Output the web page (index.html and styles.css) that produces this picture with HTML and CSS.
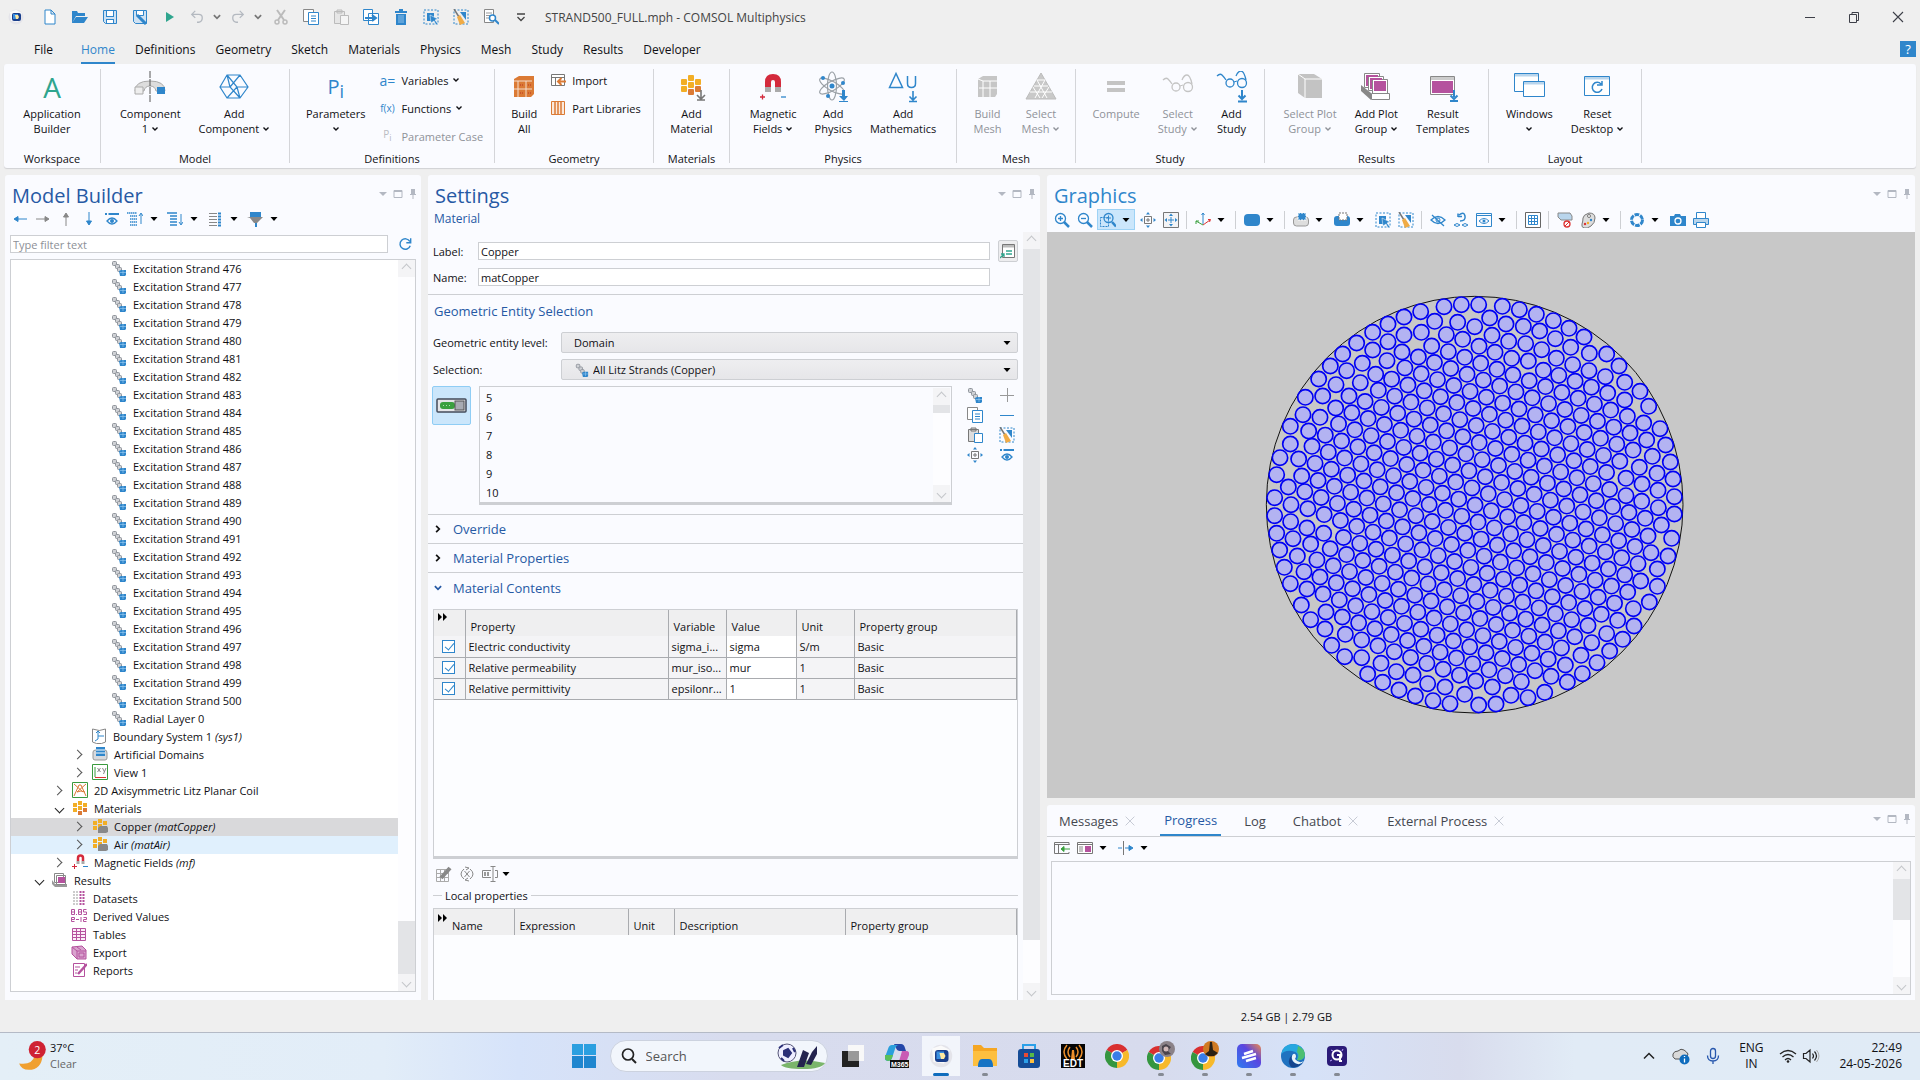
FILE: index.html
```html
<!DOCTYPE html>
<html lang="en">
<head>
<meta charset="utf-8">
<title>STRAND500_FULL.mph - COMSOL Multiphysics</title>
<link rel="stylesheet" href="styles.css">
</head>
<body>
<svg class="sprite" aria-hidden="true">
  <symbol id="logo" viewBox="0 0 16 16"><circle cx="8" cy="8" r="7.500" fill="#e4e4ea"/><path d="M2 3l6-2 6 3-4 9-7-1z" fill="#fafafa"/><rect x="4" y="4" width="9" height="8" rx="2" fill="#1a3f8c"/><rect x="5" y="5" width="5" height="5" fill="#3a8fe0"/><path d="M7 6h3l1 2-1 2H8z" fill="#ffe9a0"/></symbol>
  <symbol id="chev" viewBox="0 0 8 8"><path d="M1.500 2.500L4 5l2.500-2.500" fill="none" stroke="currentColor" stroke-width="1.400"/></symbol>
  <symbol id="caret" viewBox="0 0 8 8"><path d="M.5 2h7L4 6z" fill="currentColor"/></symbol>
  <symbol id="new" viewBox="0 0 16 16"><path d="M3 1h6l4 4v10H3zM9 1v4h4" fill="#fff" stroke="#2f86cb"/></symbol>
  <symbol id="open" viewBox="0 0 16 16"><path d="M0 2h5l1 2h7v3H4L0 14zM4 8h12l-4 6H0z" fill="#2f86cb"/></symbol>
  <symbol id="save" viewBox="0 0 16 16"><path d="M1.500 1.500h13v13h-11l-2-2z" fill="#cfe2f3" stroke="#2f86cb"/><rect x="4.500" y="1.500" width="7" height="6" fill="#fff" stroke="#2f86cb"/><rect x="4.500" y="10.500" width="7" height="4" fill="#fff" stroke="#2f86cb"/></symbol>
  <symbol id="saveas" viewBox="0 0 16 16"><path d="M1.500 1.500h13v13h-11l-2-2z" fill="#cfe2f3" stroke="#2f86cb"/><path d="M4.500 1.500h7v5h-7z" fill="#fff" stroke="#2f86cb"/><path d="M5 6l9 9" stroke="#2f86cb" stroke-width="3"/></symbol>
  <symbol id="play" viewBox="0 0 16 16"><path d="M4 3l8 5-8 5z" fill="#2fa58e"/></symbol>
  <symbol id="undo" viewBox="0 0 16 16"><path d="M2 5h8q4 0 4 4t-4 5H8M6 1L2 5l4 4" fill="none" stroke="#b4b9c0" stroke-width="1.500"/></symbol>
  <symbol id="redo" viewBox="0 0 16 16"><path d="M14 5H6q-4 0-4 4t4 5h2M10 1l4 4-4 4" fill="none" stroke="#b4b9c0" stroke-width="1.500"/></symbol>
  <symbol id="cut" viewBox="0 0 16 16"><path d="M4 1l7 10M12 1L5 11" stroke="#bbb" stroke-width="2"/><circle cx="4" cy="13" r="2" fill="none" stroke="#bbb" stroke-width="1.500"/><circle cx="12" cy="13" r="2" fill="none" stroke="#bbb" stroke-width="1.500"/></symbol>
  <symbol id="copy" viewBox="0 0 16 16"><path d="M.5.5h10v12H.5z" fill="#fff" stroke="#888"/><path d="M5.500 3.500h10v12h-10z" fill="#fff" stroke="#2f86cb"/><path d="M8 7h5M8 9.500h5M8 12h5" stroke="#2f86cb"/></symbol>
  <symbol id="pasteoff" viewBox="0 0 16 16"><path d="M1.500 2.500h10v12h-10zM4 1h5v3H4z" fill="#e6e6e6" stroke="#bbb"/><path d="M7.500 6.500h8v9h-8z" fill="#f5f5f5" stroke="#bbb"/></symbol>
  <symbol id="paste" viewBox="0 0 16 16"><path d="M1.500 2.500h10v12h-10zM4 1h5v3H4z" fill="#ddd" stroke="#777"/><path d="M7.500 6.500h8v9h-8z" fill="#fff" stroke="#2f86cb"/></symbol>
  <symbol id="dup" viewBox="0 0 16 16"><path d="M.5.5h9v11h-9zM5.500 4.500h10v11h-10z" fill="#fff" stroke="#2f86cb"/><path d="M2 9h10M9 6l4 3-4 3" fill="none" stroke="#2f86cb" stroke-width="2"/></symbol>
  <symbol id="trash" viewBox="0 0 16 16"><path d="M2 2h4V0h4v2h4v2H2zM3 5h10v11H3z" fill="#2f86cb"/><path d="M6 6v8M8 6v8M10 6v8" stroke="#8fc0e8"/></symbol>
  <symbol id="sel" viewBox="0 0 16 16"><rect x="1" y="1" width="14" height="14" fill="none" stroke="#2f86cb" stroke-dasharray="2 1.500"/><rect x="4" y="4" width="7" height="8" fill="#2f86cb"/><path d="M7 6l8 4-3 1 3 4-2 1-2-4-3 2z" fill="#2f86cb" stroke="#fff" stroke-width=".5"/></symbol>
  <symbol id="broom" viewBox="0 0 16 16"><rect x="1" y="1" width="14" height="14" fill="none" stroke="#2f86cb" stroke-dasharray="2 1.500"/><path d="M7 3h6v8z" fill="#2f86cb"/><path d="M1 0l5 8" stroke="#777" stroke-width="1.500"/><path d="M4 8l3-2 5 8-5 2z" fill="#f0ab45"/></symbol>
  <symbol id="find" viewBox="0 0 16 16"><path d="M1.500.5h9v13h-9z" fill="#fff" stroke="#888"/><path d="M3 4h6M3 6.500h5M3 9h3" stroke="#999"/><circle cx="9.500" cy="9" r="3" fill="#fff" stroke="#2f86cb" stroke-width="1.500"/><path d="M12 11l4 4" stroke="#2f86cb" stroke-width="2"/></symbol>
  <symbol id="more" viewBox="0 0 16 16"><path d="M4 5h8M4.500 8L8 11.500 11.500 8" fill="none" stroke="#444" stroke-width="1.300"/></symbol>
  <symbol id="min" viewBox="0 0 16 16"><path d="M3 8.500h10" stroke="#3d3f48"/></symbol>
  <symbol id="restore" viewBox="0 0 16 16"><path d="M3.500 5.500h7v8h-7zM6 5V3.500h6.500v8H11" fill="none" stroke="#3d3f48"/></symbol>
  <symbol id="close" viewBox="0 0 16 16"><path d="M3 3l10 10M13 3L3 13" stroke="currentColor" stroke-width="1.100"/></symbol>

  <symbol id="r-comp" viewBox="0 0 32 32"><path d="M1 20q0-10 15-10t15 10h-9q-1-5-6-5t-6 5z" fill="#ddd" stroke="#aaa"/><path d="M1 16h8v7H1z" fill="#eee" stroke="#aaa"/><path d="M23 16h8v7h-8z" fill="#2f86cb"/><path d="M16 0v32" stroke="#555" stroke-dasharray="7 1"/></symbol>
  <symbol id="r-addcomp" viewBox="0 0 32 32"><path d="M9 4h13l8 12-8 11H9L2 16zM22 4L12 16l10 11M2 16h10M9 4l10 0M9 27l10-11L9 4M19 16h11M12 16L9 4M19 16l3 11" fill="none" stroke="#2f86cb" stroke-width="1.200"/></symbol>
  <symbol id="r-build" viewBox="0 0 32 32"><path d="M6 8l5-3h15v18l-3 3H6z" fill="#db7a35"/><path d="M10 10v16M18 10v16M6 10h18M6 18h18" stroke="#fff" stroke-width="1" opacity=".75"/><path d="M12 14h3M20 14h3M12 22h3M20 22h3" stroke="#b32" stroke-dasharray="1 1"/></symbol>
  <symbol id="r-addmat" viewBox="0 0 32 32"><g fill="#f2ae26"><rect x="13" y="4" width="6" height="6" rx="1"/><rect x="6" y="8" width="6" height="6" rx="1"/><rect x="20" y="8" width="6" height="6" rx="1"/><rect x="13" y="11" width="6" height="6" rx="1"/><rect x="6" y="15" width="6" height="6" rx="1"/></g><g fill="#db7a35"><rect x="20" y="15" width="6" height="6" rx="1"/><rect x="13" y="18" width="6" height="6" rx="1"/></g><path d="M26 19v8M22 24l4 4 4-4M22 29h8" stroke="#777" stroke-width="1.600" fill="none"/></symbol>
  <symbol id="r-mag" viewBox="0 0 32 32"><path d="M11 17v-6q0-5 5-5t5 5v6" fill="none" stroke="#d42a3c" stroke-width="6"/><path d="M8 16h6v5H8zM18 16h6v5h-6z" fill="#aaa"/><path d="M3 26h5M5.500 23.500v5" stroke="#d42a3c" stroke-width="1.300"/><path d="M24 26h5" stroke="#2f86cb" stroke-width="1.300"/></symbol>
  <symbol id="r-phys" viewBox="0 0 32 32"><g fill="none" stroke="#9aa0a6" stroke-width="1.200"><ellipse cx="15" cy="15" rx="4.500" ry="14"/><ellipse cx="15" cy="15" rx="4.500" ry="14" transform="rotate(60 15 15)"/><ellipse cx="15" cy="15" rx="4.500" ry="14" transform="rotate(120 15 15)"/></g><g fill="#2f86cb"><circle cx="15" cy="15" r="2.500"/><circle cx="6" cy="7" r="2"/><circle cx="26" cy="12" r="2"/><circle cx="11" cy="25" r="2"/><path d="M25 19h3v6h3l-4 5-5-5h3z"/><path d="M22 30h9v1h-9z"/></g></symbol>
  <symbol id="r-math" viewBox="0 0 32 32"><path d="M2.500 16.500L9 2.500l6.500 14zM20.500 5v7.500q0 4 4 4t4-4V5" fill="none" stroke="#2f86cb" stroke-width="1.500"/><path d="M26 20v9M22.500 25.500L26 29l3.500-3.500M22 30.500h8" stroke="#2f86cb" stroke-width="1.600" fill="none"/></symbol>
  <symbol id="r-bmesh" viewBox="0 0 32 32"><path d="M6 8l5-3h14v18l-2 3H6z" fill="#c6c6c6"/><path d="M11 10v16M18 10v16M6 8l5 2h14M7 17h18" stroke="#fff" fill="none"/></symbol>
  <symbol id="r-smesh" viewBox="0 0 32 32"><path d="M16 2l15 26H1z" fill="#c9c9c9" stroke="#bcbcbc"/><path d="M12 9h8M9 15h14M5 21h22M12 9l10 18M8 16l7 11M20 9L10 27M24 16l-7 11" stroke="#fff" fill="none"/></symbol>
  <symbol id="r-eq" viewBox="0 0 32 32"><path d="M7 10h18v4H7zM7 17h18v4H7z" fill="#c4c4c4"/></symbol>
  <symbol id="glasses" viewBox="0 0 32 32"><path d="M1 9q3-3 5-1t4 5M20 9q2-5 5-5t5 9" fill="none" stroke="currentColor" stroke-width="1.300"/><circle cx="14" cy="16" r="4" fill="none" stroke="currentColor" stroke-width="1.300"/><circle cx="26" cy="16" r="4.500" fill="none" stroke="currentColor" stroke-width="1.300"/><path d="M18 15l3-1" stroke="currentColor"/></symbol>
  <symbol id="r-study" viewBox="0 0 32 32"><use href="#glasses" y="-4" width="32" height="32"/><path d="M26 19v9M22.500 24.500L26 28l3.500-3.500M22 30.500h9" stroke="#2f86cb" stroke-width="2" fill="none"/></symbol>
  <symbol id="r-selplot" viewBox="0 0 32 32"><path d="M4 3h16l8 5v19H11l-7-5z" fill="#c3c3c3"/><path d="M4 3l7 5h17M11 8v19" stroke="#fff" fill="none"/></symbol>
  <symbol id="r-addplot" viewBox="0 0 32 32"><path d="M1 14l10 8v7L1 20z" fill="#888"/><g fill="#fff" stroke="#888"><path d="M4.500 2.500h15v14h-15z"/><path d="M8.500 5.500h15v14h-15z"/><path d="M12.500 8.500h15v14h-15z"/><path d="M11.500 22.500h18v6h-18z"/></g><path d="M6 4h12v2H8v9H6zM10 7h12v2H12v9h-2zM14 10h12v10H14z" fill="#b5529e"/></symbol>
  <symbol id="r-result" viewBox="0 0 32 32"><path d="M3.500 5.500h24v18h-24z" fill="#fff" stroke="#888"/><path d="M4 6h23v3H4z" fill="#ccc"/><path d="M5 10h21v12H5z" fill="#b5529e"/><path d="M27 19v7M23.500 24.500L27 28l3.500-3.500M23 30h8" stroke="#2f86cb" stroke-width="2" fill="none"/></symbol>
  <symbol id="r-win" viewBox="0 0 32 32"><path d="M1.500 2.500h24v18h-24z" fill="#fff" stroke="#2f86cb"/><path d="M2 3h23v2.500H2z" fill="#b9d5ec"/><path d="M10.500 10.500h21v15h-21z" fill="#fff" stroke="#2f86cb"/><path d="M11 11h20v2.500H11z" fill="#b9d5ec"/></symbol>
  <symbol id="r-reset" viewBox="0 0 32 32"><path d="M3.500 5.500h25v19h-25z" fill="#fff" stroke="#2f86cb"/><path d="M4 6h24v2.500H4z" fill="#b9d5ec"/><path d="M20 13a5 5 0 1 0 1 5M21 10v4h-5" fill="none" stroke="#2f86cb" stroke-width="1.500"/></symbol>
  <symbol id="import" viewBox="0 0 16 16"><path d="M1.500 2.500h13v11h-13zM1.500 5.500h13M5.500 5.500v8" fill="#fff" stroke="#777"/><path d="M16 9.500H9M11.500 6L8 9.500l3.500 3.500" stroke="#db7a35" stroke-width="2" fill="none"/></symbol>
  <symbol id="partlib" viewBox="0 0 16 16"><path d="M1.500 1.500h13v13h-13z" fill="#fbe9dc" stroke="#db7a35"/><path d="M5 2v12M8 2v12M11 2v12" stroke="#db7a35" stroke-width="1.500"/></symbol>

  <symbol id="strand" viewBox="0 0 16 16"><g fill="#cfd1d5" stroke="#8f949b"><rect x="1.500" y="1.500" width="4" height="4" rx="1"/><rect x="4.500" y="4.500" width="4" height="4" rx="1"/><rect x="6.500" y="7.500" width="4" height="4" rx="1"/></g><path d="M8 11l2-1h5v5l-1 1H9z" fill="#2f86cb"/><path d="M9 12.500h6M12 10v5" stroke="#9fd0f5" stroke-width=".6"/></symbol>
  <symbol id="bsys" viewBox="0 0 16 16"><path d="M1.500 1v13l4 1.500h5l4-1.500V1q-6 3-13 0z" fill="#fff" stroke="#888"/><path d="M7 4v7M7 8h6M7 11l-3 2M5 5l2-2 2 2" stroke="#2f86cb" fill="none"/></symbol>
  <symbol id="artd" viewBox="0 0 16 16"><path d="M1 6q0-2 3-2h9q2 0 2 3v5q0 2-2 2H3q-2 0-2-2z" fill="#d8dade" stroke="#999"/><path d="M4 1h9v9H4z" fill="#2f86cb"/><path d="M4 4h9M4 7h9" stroke="#fff"/></symbol>
  <symbol id="view" viewBox="0 0 16 16"><path d="M.5.5h15v15H.5z" fill="#fff" stroke="#3a9a3e"/><path d="M3 3v10" stroke="#3a9a3e"/><path d="M3 13.500h11" stroke="#d33"/><path d="M5.500 4l3 4M8.500 4l-3 4M10.500 4l2 4M14 4l-2.500 6" stroke="#888"/></symbol>
  <symbol id="model2d" viewBox="0 0 16 16"><path d="M.5.5h15v15H.5z" fill="#fff" stroke="#3a9a3e"/><path d="M2 14L7 3h2l5 11M2 2l9 8M14 2l-9 8q4-2 8 0" fill="none" stroke="#db7a35"/></symbol>
  <symbol id="mats" viewBox="0 0 16 16"><path d="M6 1h4v4H6zM1 3h4v4H1zM11 3h4v4h-4zM6 6h4v4H6zM1 8h4v4H1z" fill="#f2ae26"/><path d="M11 8h4v4h-4zM6 11h4v4H6z" fill="#db7a35"/></symbol>
  <symbol id="mat" viewBox="0 0 16 16"><path d="M6 1h4v4H6zM1 3h4v4H1zM11 3h4v4h-4zM6 6h4v4H6zM1 8h4v4H1z" fill="#f2ae26"/><path d="M6 10l2-2h7l1 2v4l-2 1H6z" fill="#888"/></symbol>
  <symbol id="magn" viewBox="0 0 16 16"><path d="M6 7V4q0-2.500 2.500-2.500T11 4v3" fill="none" stroke="#d42a3c" stroke-width="2.500"/><path d="M4.500 7h3v3h-3zM9.500 7h3v3h-3z" fill="#aaa"/><path d="M0 12.500h5M2.500 10v5" stroke="#d42a3c"/><path d="M11 12.500h5" stroke="#2f86cb"/></symbol>
  <symbol id="resl" viewBox="0 0 16 16"><path d="M0 8l3 4h12v3H3l-3-3z" fill="#999"/><path d="M2.500 1.500h9v9h-9zM4.500 3.500h9v9h-9z" fill="#fff" stroke="#888"/><path d="M6 5h7v6H6z" fill="#b5529e"/></symbol>
  <symbol id="dset" viewBox="0 0 16 16"><path d="M3 1v14M6 1v14" stroke="#999" stroke-dasharray="2 1"/><path d="M9.500 1v14M12.500 1v14" stroke="#b5529e" stroke-width="2" stroke-dasharray="2 1"/></symbol>
  <symbol id="derv" viewBox="0 0 16 16"><path d="M.5 1.500h3v5h-3zM.5 4h3M5 6.500h1M7.500 1.500h3v5h-3zM7.500 4h3M15.500 1.500h-3V4h3v2.500h-3M3.500 13.500h-3v-4h3v2h-3M5 11.500h3M10 9v5M12.500 9.500h3v2h-3v2h3" fill="none" stroke="#b5529e"/></symbol>
  <symbol id="tabl" viewBox="0 0 16 16"><path d="M1.500 2.500h13v12h-13z" fill="#fbeef8" stroke="#b5529e"/><path d="M1 5.500h14M1 8.500h14M1 11.500h14M5.500 2v12M9.500 2v12" stroke="#b5529e"/></symbol>
  <symbol id="expo" viewBox="0 0 16 16"><path d="M1 3l10-1 4 4v9H6l-5-5z" fill="#d9a3ce" stroke="#b5529e"/><path d="M1 3l5 4h9M6 7v8M6 3l4 3M8 9h5v4H8z" fill="none" stroke="#b5529e"/></symbol>
  <symbol id="rept" viewBox="0 0 16 16"><path d="M2.500 1.500h11v13h-11z" fill="#fff" stroke="#b5529e"/><path d="M4 5h5M4 8h3M4 11h2" stroke="#b5529e"/><path d="M16 2L7 12" stroke="#b5529e" stroke-width="2.500"/></symbol>

  <symbol id="al" viewBox="0 0 16 16"><path d="M15 8H3M6 5.500L2 8l4 2.500z" fill="currentColor" stroke="currentColor"/></symbol>
  <symbol id="ar" viewBox="0 0 16 16"><path d="M1 8h12M10 5.500l4 2.500-4 2.500z" fill="currentColor" stroke="currentColor"/></symbol>
  <symbol id="au" viewBox="0 0 16 16"><path d="M8 15V3M5.500 6L8 2l2.500 4z" fill="currentColor" stroke="currentColor"/></symbol>
  <symbol id="ad" viewBox="0 0 16 16"><path d="M8 1v12M5.500 10L8 14l2.500-4z" fill="currentColor" stroke="currentColor"/></symbol>
  <symbol id="eye" viewBox="0 0 16 16"><path d="M1 3h2M4.500 3H15" stroke="#2f86cb" stroke-width="2"/><path d="M3 10q5-6 10 0-5 6-10 0z" fill="none" stroke="#2f86cb" stroke-width="1.300"/><circle cx="8" cy="10" r="2" fill="#2f86cb"/></symbol>
  <symbol id="colup" viewBox="0 0 16 16"><path d="M0 2h10M3 5h7M3 8h7M3 11h7M3 14h7" stroke="#2f86cb" stroke-width="1.500" stroke-dasharray="1.500 .5"/><path d="M14 13V3M12 5l2-3 2 3" stroke="#2f86cb" fill="none"/></symbol>
  <symbol id="coldn" viewBox="0 0 16 16"><path d="M0 2h10M3 5h7M3 8h7M3 11h7M3 14h7" stroke="#2f86cb" stroke-width="1.500"/><path d="M14 3v10M12 11l2 3 2-3" stroke="#2f86cb" fill="none"/></symbol>
  <symbol id="cols" viewBox="0 0 16 16"><path d="M2 2.500h8M2 5.500h8M2 8.500h8M2 11.500h8M2 14.500h8" stroke="#888" stroke-width="1.200"/><path d="M11 2.500h3M11 5.500h3M11 8.500h3M11 11.500h3M11 14.500h3" stroke="#2f86cb" stroke-width="1.800"/></symbol>
  <symbol id="filter" viewBox="0 0 16 16"><path d="M3 1h11v5H3z" fill="#2f86cb"/><path d="M0 6h16l-6 6H7L3 7z" fill="#888"/><path d="M8 12h2v4H8z" fill="#2f86cb"/></symbol>
  <symbol id="refresh" viewBox="0 0 16 16"><path d="M13.500 5a6 6 0 1 0 .5 5M14.500 1.500v5h-5" fill="none" stroke="#2f86cb" stroke-width="1.600"/></symbol>
  <symbol id="panemenu" viewBox="0 0 40 12"><path d="M1 4h8L5 8z" fill="#b3b8c2"/><path d="M16 2.500h8v7h-8zM16 3.500h8" fill="none" stroke="#b3b8c2"/><path d="M33 1h4v5h1v1h-2.500v4h-1V7H32V6h1z" fill="#b3b8c2"/></symbol>
  <symbol id="goto" viewBox="0 0 16 16"><path d="M2.500 1.500h12v13h-12z" fill="#fff" stroke="#777"/><path d="M3 2h11v2.500H3z" fill="#bbb"/><path d="M6 8h6M6 11h6M0 15l4-4M1 11h3v3" stroke="#2fa58e" stroke-width="1.300" fill="none"/></symbol>
  <symbol id="active" viewBox="0 0 32 16"><rect x="1" y="1" width="29" height="13" rx="1" fill="#e5e5e8" stroke="#444b5a" stroke-width="1.500"/><rect x="4" y="4" width="15" height="7" rx="3" fill="#3aa03e"/><path d="M7 7.500h7" stroke="#a8e0a8" stroke-dasharray="1 2"/><rect x="19" y="3" width="9" height="9" fill="#a8abb2" stroke="#555"/></symbol>
  <symbol id="plus" viewBox="0 0 16 16"><path d="M1 8.500h14M8.500 1v14" stroke="#999"/></symbol>
  <symbol id="minus" viewBox="0 0 16 16"><path d="M1 8.500h14" stroke="#2f86cb"/></symbol>
  <symbol id="center" viewBox="0 0 16 16"><path d="M4.500 4.500h7v7h-7zM8 6v4M6 8h4" fill="none" stroke="#777"/><path d="M8 0l2 2.500H6zM8 16l2-2.500H6zM0 8l2.500-2v4zM16 8l-2.500-2v4z" fill="#2f86cb"/></symbol>
  <symbol id="extents" viewBox="0 0 16 16"><path d="M.5.500h15v15H.5z" fill="#f4f4f6" stroke="#777"/><path d="M8 1.500l2 2.500H6zM8 14.500l2-2.500H6zM1.500 8L4 6v4zM14.500 8L12 6v4z" fill="#2f86cb"/><path d="M5 8h6M8 5v6" stroke="#2f86cb"/></symbol>
  <symbol id="ff" viewBox="0 0 10 8"><path d="M0 0l4 4-4 4zM5 0l4 4-4 4z" fill="#000"/></symbol>
  <symbol id="edit" viewBox="0 0 16 16"><path d="M.5 3.500h12v12H.5zM.5 7.500h12M.5 11.500h12M4.500 3.500v12M8.500 3.500v12" fill="none" stroke="#aaa"/><path d="M14 2L5 12" stroke="#888" stroke-width="4"/></symbol>
  <symbol id="resetx" viewBox="0 0 16 16"><path d="M5 3q-6 5 0 10M11 3q6 5 0 10M5.500 5l5 6M10.500 5l-5 6M6 1l4 1-3 2M10 15l-4-1 3-2" fill="none" stroke="#888"/></symbol>
  <symbol id="field" viewBox="0 0 16 16"><path d="M9 4.500H.5v7H9M13 4.500h2.500v7H13M11 0v16M8.500.5h5M8.500 15.500h5" fill="none" stroke="#888"/><path d="M2 6h2v4H2zM5 6h2v4H5z" fill="#999"/></symbol>

  <symbol id="zin" viewBox="0 0 16 16"><circle cx="6.500" cy="6.500" r="5" fill="none" stroke="#2f86cb" stroke-width="1.300"/><path d="M4 6.500h5M6.500 4v5" stroke="#2f86cb" stroke-width="1.300"/><path d="M10 10l5 5" stroke="#2f86cb" stroke-width="2.500"/></symbol>
  <symbol id="zout" viewBox="0 0 16 16"><circle cx="6.500" cy="6.500" r="5" fill="none" stroke="#2f86cb" stroke-width="1.300"/><path d="M4 6.500h5" stroke="#2f86cb" stroke-width="1.300"/><path d="M10 10l5 5" stroke="#2f86cb" stroke-width="2.500"/></symbol>
  <symbol id="zbox" viewBox="0 0 16 16"><path d="M.5 5.500h8v9h-8z" fill="none" stroke="#2f86cb" stroke-dasharray="2 1"/><circle cx="8.500" cy="6" r="4.500" fill="none" stroke="#2f86cb" stroke-width="1.300"/><path d="M6 6h5M8.500 3.500v5" stroke="#2f86cb"/><path d="M12 10l4 4.500" stroke="#2f86cb" stroke-width="2.500"/></symbol>
  <symbol id="axes" viewBox="0 0 16 16"><path d="M8 12V1M6.500 3L8 1l1.500 2" stroke="#2f86cb" fill="none"/><path d="M8 13l7-5M13 7.500l2.500 0-1 2.500" stroke="#d33" fill="none"/><path d="M8 13L1 9M1 12V9h3" stroke="#3aa03e" fill="none"/></symbol>
  <symbol id="blob" viewBox="0 0 16 16"><rect y="2" width="16" height="12" rx="4" fill="#2f86cb"/></symbol>
  <symbol id="selg" viewBox="0 0 16 16"><rect x=".5" y="5" width="15" height="9" rx="3" fill="#ddd" stroke="#999"/><rect x="5" y="1" width="8" height="7" fill="#2f86cb" stroke="#fff" stroke-dasharray="2 1"/></symbol>
  <symbol id="selb" viewBox="0 0 16 16"><rect y="4" width="16" height="10" rx="3" fill="#2f86cb"/><rect x="5" y="1" width="8" height="7" fill="#fff" stroke="#777" stroke-dasharray="2 1"/></symbol>
  <symbol id="hide" viewBox="0 0 16 16"><path d="M1 8q7-7 14 0-7 7-14 0zM2 3l12 11" fill="none" stroke="#2f86cb" stroke-width="1.300"/><circle cx="8" cy="8" r="2" fill="none" stroke="#2f86cb"/></symbol>
  <symbol id="rehide" viewBox="0 0 16 16"><path d="M5 5V1.500M5 4.500h4M6 3q5-4 6 1t-5 5" fill="none" stroke="#2f86cb" stroke-width="1.500"/><path d="M1 13q3-3 6 0-3 3-6 0zM9 13q3-3 6 0-3 3-6 0z" fill="none" stroke="#2f86cb"/></symbol>
  <symbol id="viewb" viewBox="0 0 16 16"><path d="M.5 1.500h15v13H.5zM.5 3.500h15" fill="none" stroke="#2f86cb"/><path d="M3 9q5-5 10 0-5 5-10 0z" fill="none" stroke="#2f86cb"/><circle cx="8" cy="9" r="1.500" fill="#2f86cb"/></symbol>
  <symbol id="grid" viewBox="0 0 16 16"><path d="M.5.500h15v15H.5z" fill="#fff" stroke="#666"/><path d="M3.500 3.500h9v9h-9zM6.500 3v10M9.500 3v10M3 6.500h10M3 9.500h10" fill="none" stroke="#2f86cb"/></symbol>
  <symbol id="noclip" viewBox="0 0 16 16"><path d="M1 1h12l2 3v4H4L1 5z" fill="#b9d5ec" stroke="#888"/><circle cx="10" cy="12" r="3" fill="#fff" stroke="#d33" stroke-width="1.300"/><path d="M8 14l4-4" stroke="#d33"/></symbol>
  <symbol id="palette" viewBox="0 0 16 16"><path d="M9 1q6 0 6 5t-4 8-7 2q-3-1-2-4t1-6 6-5z" fill="#ddd" stroke="#777"/><circle cx="9" cy="4" r="1.500" fill="#fff" stroke="#777"/><circle cx="11" cy="8" r="1.200" fill="#2f86cb"/><circle cx="8" cy="11" r="1.200" fill="#f2ae26"/><circle cx="5" cy="12" r="1.200" fill="#d33"/></symbol>
  <symbol id="shutter" viewBox="0 0 16 16"><circle cx="8" cy="8" r="5.500" fill="none" stroke="#2f86cb" stroke-width="3" stroke-dasharray="4.700 1"/></symbol>
  <symbol id="camera" viewBox="0 0 16 16"><path d="M0 4h4l1-2h5l1 2h5v10H0z" fill="#2f86cb"/><circle cx="8" cy="9" r="3" fill="#2f86cb" stroke="#fff" stroke-width="1.300"/></symbol>
  <symbol id="printer" viewBox="0 0 16 16"><path d="M3.500.500h9v6h-9z" fill="#fff" stroke="#2f86cb"/><path d="M.5 6.500h15v6H.5z" fill="#b9d5ec" stroke="#2f86cb"/><path d="M3.500 10.500h9v5h-9z" fill="#fff" stroke="#2f86cb"/></symbol>
  <symbol id="wleft" viewBox="0 0 16 16"><path d="M15 5V2.500H.5v11H15V12M.5 4.500h15M4.500 4.500v9" fill="none" stroke="#777"/><path d="M16 9H8M10 6.500L7 9l3 2.500z" fill="#3aa03e" stroke="#3aa03e"/></symbol>
  <symbol id="wplot" viewBox="0 0 16 16"><path d="M.5 2.500h15v11H.5zM.5 4.500h15" fill="#fff" stroke="#777"/><path d="M8 6h6v6H8z" fill="#b5529e"/><path d="M2 7h4M2 9h4M2 11h4" stroke="#888"/></symbol>
  <symbol id="split" viewBox="0 0 16 16"><path d="M5.500 1v14" stroke="#777"/><path d="M0 8h4M7 8h6M11 5.500l4 2.500-4 2.500z" fill="#2f86cb" stroke="#2f86cb"/></symbol>

  <symbol id="chrome" viewBox="0 0 24 24"><path d="M12 12L1.600 6A12 12 0 0 1 22.400 6z" fill="#d93030"/><path d="M12 12L22.400 6A12 12 0 0 1 12 24z" fill="#f7b92b"/><path d="M12 12v12A12 12 0 0 1 1.600 6z" fill="#35963f"/><circle cx="12" cy="12" r="6" fill="#fff"/><circle cx="12" cy="12" r="4.700" fill="#3a7de8"/></symbol>
</svg>

<header class="titlebar">
  <span class="applogo"><svg class="i16"><use href="#logo"/></svg></span>
  <div class="quick">
    <button aria-label="New"><svg class="i16"><use href="#new"/></svg></button>
    <button aria-label="Open"><svg class="i16"><use href="#open"/></svg></button>
    <button aria-label="Save"><svg class="i16"><use href="#save"/></svg></button>
    <button aria-label="Save as"><svg class="i16"><use href="#saveas"/></svg></button>
    <button aria-label="Run"><svg class="i16"><use href="#play"/></svg></button>
    <button class="slim" aria-label="Undo"><svg class="i14"><use href="#undo"/></svg></button>
    <button class="drop" aria-label="Undo list"><svg class="i10"><use href="#chev"/></svg></button>
    <button class="slim" aria-label="Redo"><svg class="i14"><use href="#redo"/></svg></button>
    <button class="drop" aria-label="Redo list"><svg class="i10"><use href="#chev"/></svg></button>
    <button aria-label="Cut"><svg class="i16"><use href="#cut"/></svg></button>
    <button aria-label="Copy"><svg class="i16"><use href="#copy"/></svg></button>
    <button aria-label="Paste"><svg class="i16"><use href="#pasteoff"/></svg></button>
    <button aria-label="Duplicate"><svg class="i16"><use href="#dup"/></svg></button>
    <button aria-label="Delete"><svg class="i16"><use href="#trash"/></svg></button>
    <button aria-label="Select"><svg class="i16"><use href="#sel"/></svg></button>
    <button aria-label="Clear selection"><svg class="i16"><use href="#broom"/></svg></button>
    <button aria-label="Find"><svg class="i16"><use href="#find"/></svg></button>
    <button aria-label="Customize"><svg class="i16"><use href="#more"/></svg></button>
  </div>
  <h1>STRAND500_FULL.mph - COMSOL Multiphysics</h1>
  <div class="winbtns">
    <button aria-label="Minimize"><svg class="i16"><use href="#min"/></svg></button>
    <button aria-label="Restore"><svg class="i16"><use href="#restore"/></svg></button>
    <button aria-label="Close"><svg class="i16"><use href="#close"/></svg></button>
  </div>
</header>

<nav class="menu">
  <a href="#" class="file">File</a><a href="#" class="on">Home</a><a href="#">Definitions</a><a href="#">Geometry</a><a href="#">Sketch</a><a href="#">Materials</a><a href="#">Physics</a><a href="#">Mesh</a><a href="#">Study</a><a href="#">Results</a><a href="#">Developer</a>
  <button class="help" aria-label="Help">?</button>
</nav>

<section class="ribbon">
  <div class="group g1"><div class="btns"><button><span class="big green">A</span><span>Application<br>Builder</span></button></div><p>Workspace</p></div>
  <div class="group g2"><div class="btns">
    <button><svg class="i32"><use href="#r-comp"/></svg><span>Component<br>1 <svg class="chev"><use href="#chev"/></svg></span></button>
    <button><svg class="i32"><use href="#r-addcomp"/></svg><span>Add<br>Component <svg class="chev"><use href="#chev"/></svg></span></button></div><p>Model</p></div>
  <div class="group g3"><div class="btns">
    <button><span class="big pi">P<sub>i</sub></span><span>Parameters<br><svg class="chev"><use href="#chev"/></svg></span></button>
    <div class="stack"><button><i class="lead">a=</i>Variables <svg class="chev"><use href="#chev"/></svg></button><button><i class="lead fx">f(x)</i>Functions <svg class="chev"><use href="#chev"/></svg></button><button disabled><i class="lead fx">P<sub>i</sub></i>Parameter Case</button></div></div><p>Definitions</p></div>
  <div class="group g4"><div class="btns">
    <button><svg class="i32"><use href="#r-build"/></svg><span>Build<br>All</span></button>
    <div class="stack"><button><svg class="lead i16"><use href="#import"/></svg>Import</button><button><svg class="lead i16"><use href="#partlib"/></svg>Part Libraries</button></div></div><p>Geometry</p></div>
  <div class="group g5"><div class="btns"><button><svg class="i32"><use href="#r-addmat"/></svg><span>Add<br>Material</span></button></div><p>Materials</p></div>
  <div class="group g6"><div class="btns">
    <button><svg class="i32"><use href="#r-mag"/></svg><span>Magnetic<br>Fields <svg class="chev"><use href="#chev"/></svg></span></button>
    <button><svg class="i32"><use href="#r-phys"/></svg><span>Add<br>Physics</span></button>
    <button><svg class="i32"><use href="#r-math"/></svg><span>Add<br>Mathematics</span></button></div><p>Physics</p></div>
  <div class="group g7"><div class="btns">
    <button disabled><svg class="i32"><use href="#r-bmesh"/></svg><span>Build<br>Mesh</span></button>
    <button disabled><svg class="i32"><use href="#r-smesh"/></svg><span>Select<br>Mesh <svg class="chev"><use href="#chev"/></svg></span></button></div><p>Mesh</p></div>
  <div class="group g8"><div class="btns">
    <button disabled><svg class="i32"><use href="#r-eq"/></svg><span>Compute</span></button>
    <button disabled><svg class="i32 pale"><use href="#glasses"/></svg><span>Select<br>Study <svg class="chev"><use href="#chev"/></svg></span></button>
    <button><svg class="i32 blue"><use href="#r-study"/></svg><span>Add<br>Study</span></button></div><p>Study</p></div>
  <div class="group g9"><div class="btns">
    <button disabled><svg class="i32"><use href="#r-selplot"/></svg><span>Select Plot<br>Group <svg class="chev"><use href="#chev"/></svg></span></button>
    <button><svg class="i32"><use href="#r-addplot"/></svg><span>Add Plot<br>Group <svg class="chev"><use href="#chev"/></svg></span></button>
    <button><svg class="i32"><use href="#r-result"/></svg><span>Result<br>Templates</span></button></div><p>Results</p></div>
  <div class="group g10"><div class="btns">
    <button><svg class="i32"><use href="#r-win"/></svg><span>Windows<br><svg class="chev"><use href="#chev"/></svg></span></button>
    <button><svg class="i32"><use href="#r-reset"/></svg><span>Reset<br>Desktop <svg class="chev"><use href="#chev"/></svg></span></button></div><p>Layout</p></div>
</section>

<main class="work">
  <section class="pane builder">
    <div class="panehead"><h2>Model Builder</h2><svg class="panemenu"><use href="#panemenu"/></svg></div>
    <div class="treebar">
      <button class="blue" aria-label="Previous"><svg class="i16"><use href="#al"/></svg></button>
      <button class="grey" aria-label="Next"><svg class="i16"><use href="#ar"/></svg></button>
      <button class="grey" aria-label="Up"><svg class="i16"><use href="#au"/></svg></button>
      <button class="blue" aria-label="Down"><svg class="i16"><use href="#ad"/></svg></button>
      <button aria-label="Show"><svg class="i16"><use href="#eye"/></svg></button>
      <button class="pair" aria-label="Collapse"><svg class="i16"><use href="#colup"/></svg><svg class="caret"><use href="#caret"/></svg></button>
      <button class="pair" aria-label="Expand"><svg class="i16"><use href="#coldn"/></svg><svg class="caret"><use href="#caret"/></svg></button>
      <button class="pair" aria-label="Columns"><svg class="i16"><use href="#cols"/></svg><svg class="caret"><use href="#caret"/></svg></button>
      <button class="pair" aria-label="Filter"><svg class="i16"><use href="#filter"/></svg><svg class="caret"><use href="#caret"/></svg></button>
    </div>
    <div class="filter"><input type="text" placeholder="Type filter text" aria-label="Filter"><button aria-label="Refresh"><svg class="i14"><use href="#refresh"/></svg></button></div>
    <div class="treebox">
      <ul class="tree">
        <li class="l3"><svg><use href="#strand"/></svg>Excitation Strand 476</li>
        <li class="l3"><svg><use href="#strand"/></svg>Excitation Strand 477</li>
        <li class="l3"><svg><use href="#strand"/></svg>Excitation Strand 478</li>
        <li class="l3"><svg><use href="#strand"/></svg>Excitation Strand 479</li>
        <li class="l3"><svg><use href="#strand"/></svg>Excitation Strand 480</li>
        <li class="l3"><svg><use href="#strand"/></svg>Excitation Strand 481</li>
        <li class="l3"><svg><use href="#strand"/></svg>Excitation Strand 482</li>
        <li class="l3"><svg><use href="#strand"/></svg>Excitation Strand 483</li>
        <li class="l3"><svg><use href="#strand"/></svg>Excitation Strand 484</li>
        <li class="l3"><svg><use href="#strand"/></svg>Excitation Strand 485</li>
        <li class="l3"><svg><use href="#strand"/></svg>Excitation Strand 486</li>
        <li class="l3"><svg><use href="#strand"/></svg>Excitation Strand 487</li>
        <li class="l3"><svg><use href="#strand"/></svg>Excitation Strand 488</li>
        <li class="l3"><svg><use href="#strand"/></svg>Excitation Strand 489</li>
        <li class="l3"><svg><use href="#strand"/></svg>Excitation Strand 490</li>
        <li class="l3"><svg><use href="#strand"/></svg>Excitation Strand 491</li>
        <li class="l3"><svg><use href="#strand"/></svg>Excitation Strand 492</li>
        <li class="l3"><svg><use href="#strand"/></svg>Excitation Strand 493</li>
        <li class="l3"><svg><use href="#strand"/></svg>Excitation Strand 494</li>
        <li class="l3"><svg><use href="#strand"/></svg>Excitation Strand 495</li>
        <li class="l3"><svg><use href="#strand"/></svg>Excitation Strand 496</li>
        <li class="l3"><svg><use href="#strand"/></svg>Excitation Strand 497</li>
        <li class="l3"><svg><use href="#strand"/></svg>Excitation Strand 498</li>
        <li class="l3"><svg><use href="#strand"/></svg>Excitation Strand 499</li>
        <li class="l3"><svg><use href="#strand"/></svg>Excitation Strand 500</li>
        <li class="l3"><svg><use href="#strand"/></svg>Radial Layer 0</li>
        <li class="l2"><svg><use href="#bsys"/></svg>Boundary System 1&nbsp;<em>(sys1)</em></li>
        <li class="l2 shut"><svg><use href="#artd"/></svg>Artificial Domains</li>
        <li class="l2 shut"><svg><use href="#view"/></svg>View 1</li>
        <li class="l1 shut"><svg><use href="#model2d"/></svg>2D Axisymmetric Litz Planar Coil</li>
        <li class="l1 openn"><svg><use href="#mats"/></svg>Materials</li>
        <li class="l2 shut picked"><svg><use href="#mat"/></svg>Copper&nbsp;<em>(matCopper)</em></li>
        <li class="l2 shut hover"><svg><use href="#mat"/></svg>Air&nbsp;<em>(matAir)</em></li>
        <li class="l1 shut"><svg><use href="#magn"/></svg>Magnetic Fields&nbsp;<em>(mf)</em></li>
        <li class="l0 openn"><svg><use href="#resl"/></svg>Results</li>
        <li class="l1"><svg><use href="#dset"/></svg>Datasets</li>
        <li class="l1"><svg><use href="#derv"/></svg>Derived Values</li>
        <li class="l1"><svg><use href="#tabl"/></svg>Tables</li>
        <li class="l1"><svg><use href="#expo"/></svg>Export</li>
        <li class="l1"><svg><use href="#rept"/></svg>Reports</li>
      </ul>
      <div class="bar treescroll"><span class="up"></span><span class="room"></span><span class="thumb"></span><span class="down"></span></div>
    </div>
  </section>

  <section class="pane settings">
    <div class="panehead"><h2>Settings</h2><svg class="panemenu"><use href="#panemenu"/></svg></div>
    <h3 class="kind">Material</h3>
    <div class="scroller">
      <form class="form">
        <div class="names">
          <label for="lab">Label:</label><input id="lab" type="text" value="Copper"><button type="button" class="goto" aria-label="Go to source"><svg class="i16"><use href="#goto"/></svg></button>
          <label for="nam">Name:</label><input id="nam" type="text" value="matCopper">
        </div>
        <h3 class="sec first">Geometric Entity Selection</h3>
        <div class="geo">
          <label for="lev">Geometric entity level:</label><div class="pick"><select id="lev"><option>Domain</option></select><svg class="caret"><use href="#caret"/></svg></div>
          <label for="seln">Selection:</label><div class="pick withicon"><svg class="i14 lefticon"><use href="#strand"/></svg><select id="seln"><option>All Litz Strands (Copper)</option></select><svg class="caret"><use href="#caret"/></svg></div>
        </div>
        <div class="entities">
          <button type="button" class="toggle" aria-label="Active"><svg><use href="#active"/></svg></button>
          <div class="list"><ul><li>5</li><li>6</li><li>7</li><li>8</li><li>9</li><li>10</li></ul><div class="bar listscroll"><span class="up"></span><span class="thumb"></span><span class="room"></span><span class="down"></span></div></div>
          <div class="tools">
            <button type="button" aria-label="Create selection"><svg class="i16"><use href="#strand"/></svg></button><button type="button" aria-label="Add"><svg class="i16"><use href="#plus"/></svg></button>
            <button type="button" aria-label="Copy selection"><svg class="i16"><use href="#copy"/></svg></button><button type="button" aria-label="Remove"><svg class="i16"><use href="#minus"/></svg></button>
            <button type="button" aria-label="Paste selection"><svg class="i16"><use href="#paste"/></svg></button><button type="button" aria-label="Clear"><svg class="i16"><use href="#broom"/></svg></button>
            <button type="button" aria-label="Zoom to selection"><svg class="i16"><use href="#center"/></svg></button><button type="button" aria-label="Visibility"><svg class="i16"><use href="#eye"/></svg></button>
          </div>
        </div>
        <h3 class="sec fold"><svg class="side"><use href="#chev"/></svg>Override</h3>
        <h3 class="sec fold"><svg class="side"><use href="#chev"/></svg>Material Properties</h3>
        <h3 class="sec fold unfolded"><svg><use href="#chev"/></svg>Material Contents</h3>
        <div class="tablebox contents">
          <table>
            <colgroup><col class="c31"><col class="c203"><col class="c58"><col class="c70"><col class="c58"><col></colgroup>
            <thead><tr><th class="ffc"><svg><use href="#ff"/></svg></th><th>Property</th><th>Variable</th><th>Value</th><th>Unit</th><th>Property group</th></tr></thead>
            <tbody>
              <tr><td><input type="checkbox" checked aria-label="Electric conductivity"></td><td>Electric conductivity</td><td>sigma_i...</td><td class="w">sigma</td><td>S/m</td><td>Basic</td></tr>
              <tr><td><input type="checkbox" checked aria-label="Relative permeability"></td><td>Relative permeability</td><td>mur_iso...</td><td class="w">mur</td><td>1</td><td>Basic</td></tr>
              <tr><td><input type="checkbox" checked aria-label="Relative permittivity"></td><td>Relative permittivity</td><td>epsilonr...</td><td class="w">1</td><td>1</td><td>Basic</td></tr>
            </tbody>
          </table>
        </div>
        <div class="minibar"><button type="button" aria-label="Edit"><svg class="i16"><use href="#edit"/></svg></button><button type="button" aria-label="Reset"><svg class="i16"><use href="#resetx"/></svg></button><button type="button" aria-label="Rename"><svg class="i16"><use href="#field"/></svg><svg class="caret"><use href="#caret"/></svg></button></div>
        <h4 class="rule">Local properties</h4>
        <div class="tablebox local">
          <table>
            <colgroup><col class="c80"><col class="c114"><col class="c46"><col class="c171"><col></colgroup>
            <thead><tr><th class="ffn"><svg><use href="#ff"/></svg>Name</th><th>Expression</th><th>Unit</th><th>Description</th><th>Property group</th></tr></thead>
          </table>
        </div>
      </form>
      <div class="bar formscroll"><span class="up"></span><span class="thumb"></span><span class="room"></span><span class="down"></span></div>
    </div>
  </section>

  <div class="right">
    <section class="pane graphics">
      <div class="panehead"><h2 class="lit">Graphics</h2><svg class="panemenu"><use href="#panemenu"/></svg></div>
      <div class="gbar">
        <button aria-label="Zoom in"><svg><use href="#zin"/></svg></button><button aria-label="Zoom out"><svg><use href="#zout"/></svg></button>
        <button class="lit" aria-label="Zoom box"><svg><use href="#zbox"/></svg><svg class="caret"><use href="#caret"/></svg></button>
        <button aria-label="Zoom to selection"><svg><use href="#center"/></svg></button><button aria-label="Zoom extents"><svg><use href="#extents"/></svg></button>
        <hr class="near"><button aria-label="Axes"><svg><use href="#axes"/></svg><svg class="caret"><use href="#caret"/></svg></button>
        <hr><button aria-label="Level"><svg><use href="#blob"/></svg><svg class="caret"><use href="#caret"/></svg></button>
        <hr><button aria-label="Select objects"><svg><use href="#selg"/></svg><svg class="caret"><use href="#caret"/></svg></button><button class="apart" aria-label="Select domains"><svg><use href="#selb"/></svg><svg class="caret"><use href="#caret"/></svg></button>
        <button class="apart" aria-label="Select box"><svg><use href="#sel"/></svg></button><button aria-label="Deselect"><svg><use href="#broom"/></svg></button>
        <hr class="near"><button aria-label="Hide"><svg><use href="#hide"/></svg></button><button aria-label="Reset hiding"><svg><use href="#rehide"/></svg></button><button aria-label="View"><svg><use href="#viewb"/></svg><svg class="caret"><use href="#caret"/></svg></button>
        <hr><button aria-label="Grid"><svg><use href="#grid"/></svg></button>
        <hr class="near"><button aria-label="Clipping"><svg><use href="#noclip"/></svg></button><button aria-label="Colors"><svg><use href="#palette"/></svg><svg class="caret"><use href="#caret"/></svg></button>
        <hr><button aria-label="Render"><svg><use href="#shutter"/></svg><svg class="caret"><use href="#caret"/></svg></button><button class="apart" aria-label="Snapshot"><svg><use href="#camera"/></svg></button><button aria-label="Print"><svg><use href="#printer"/></svg></button>
      </div>
      <div class="plot"><svg id="coil" viewBox="0 0 1350 1350" role="img" aria-label="Litz strands"><circle class="hull" cx="674" cy="674" r="625"/></svg></div>
    </section>

    <section class="pane log">
      <div class="tabs">
        <a href="#">Messages<svg class="x"><use href="#close"/></svg></a><a href="#" class="on">Progress</a><a href="#">Log</a><a href="#">Chatbot<svg class="x"><use href="#close"/></svg></a><a href="#">External Process<svg class="x"><use href="#close"/></svg></a>
        <svg class="panemenu"><use href="#panemenu"/></svg>
      </div>
      <div class="gbar logbar"><button aria-label="Attach"><svg><use href="#wleft"/></svg></button><button aria-label="Plot window"><svg><use href="#wplot"/></svg><svg class="caret"><use href="#caret"/></svg></button><button class="apart" aria-label="Split"><svg><use href="#split"/></svg><svg class="caret"><use href="#caret"/></svg></button></div>
      <div class="output"><div class="bar logscroll"><span class="up"></span><span class="thumb"></span><span class="room"></span><span class="down"></span></div></div>
    </section>
  </div>
</main>

<footer class="status"><span>2.54 GB | 2.79 GB</span></footer>

<div class="taskbar">
  <button class="weather"><svg viewBox="0 0 28 30"><path d="M1 22q12 2 15-8h7q-1 14-13 14-7 0-9-6z" fill="#f0a030"/><circle cx="18" cy="9" r="8" fill="#cf2233"/><text x="18" y="13" text-anchor="middle">2</text></svg><span>37°C<br><small>Clear</small></span></button>
  <div class="apps">
    <button aria-label="Start"><svg class="i24" viewBox="0 0 24 24"><path d="M0 0h11v11H0zM12 0h12v11H12z" fill="#2b9fe0"/><path d="M0 12h11v12H0zM12 12h12v12H12z" fill="#1f86cf"/></svg></button>
    <label class="search"><svg viewBox="0 0 16 16" class="i16"><circle cx="7" cy="6.500" r="5.500" fill="none" stroke="#222" stroke-width="1.700"/><path d="M11 11l4 4" stroke="#222" stroke-width="2"/></svg><input type="search" placeholder="Search" aria-label="Search"><svg class="ball" viewBox="0 0 48 26"><path d="M4 22q20-8 44-2-4 6-22 6-18 0-22-4z" fill="#7ab56b"/><circle cx="10" cy="10" r="9" fill="#eef" stroke="#557"/><path d="M7 8l4-2 3 4-3 4-4-2zM2 5l4-3M16 5l2 4M4 15l3 3" fill="#2a2f77" stroke="#2a2f77" stroke-width="2"/><path d="M20 24l6-17 6 3-5 14zM29 21l6-12 5-6v8l-6 11z" fill="#23234e"/></svg></label>
    <button aria-label="Task view"><svg class="i24" viewBox="0 0 24 24"><path d="M7 1h16v16H7z" fill="#f8f8f8"/><path d="M1 7h17v16H1z" fill="#222"/><path d="M7 7h11v10H7z" fill="#999"/></svg></button>
    <button aria-label="Microsoft 365"><svg class="i24" viewBox="0 0 24 24"><path d="M9 0h7q3 0 4 4l1 3h-6q-3 0-4-3z" fill="#2446a8"/><path d="M7 1h7q-3 0-4 4l-3 9q-1 3-4 3-4 0-3-4l3-8q1-4 4-4z" fill="#2a9fdc"/><path d="M0 11l8 0-1 3q-1 3-4 3-4 0-3-6z" fill="#5abf5a"/><path d="M17 7h4q4 0 3 4l-2 5q-1 2-4 2h-7q3 0 4-4z" fill="#c95bb4"/><path d="M5 16h19v8H5z" fill="#111"/><text x="6" y="23" class="m365">M365</text></svg></button>
    <button class="tile run" aria-label="COMSOL"><svg class="i24"><use href="#logo"/></svg></button>
    <button class="run dot" aria-label="File Explorer"><svg class="i24" viewBox="0 0 24 24"><path d="M0 1h8l3 3h13v18H0z" fill="#f5a623"/><path d="M0 7h24v15H0z" fill="#fdbf3f"/><path d="M5 23q0-8 4-8h7q4 0 4 8z" fill="#1673c4"/></svg></button>
    <button aria-label="Store"><svg class="i24" viewBox="0 0 24 24"><path d="M6 5V1h12v4" fill="none" stroke="#2ca0e8" stroke-width="2"/><rect x="1" y="5" width="22" height="19" rx="3" fill="#154c96"/><path d="M7 9h4v4H7z" fill="#e84a35"/><path d="M13 9h4v4h-4z" fill="#58b947"/><path d="M7 15h4v4H7z" fill="#2ca0e8"/><path d="M13 15h4v4h-4z" fill="#fdbf3f"/></svg></button>
    <button aria-label="EDT"><svg class="i24" viewBox="0 0 24 24"><path d="M0 0h24v24H0z" fill="#050505"/><path d="M9 3q-4 5 0 10M15 3q4 5 0 10M6 1q-6 7 0 14M18 1q6 7 0 14" fill="none" stroke="#ec8e2a" stroke-width="1.500"/><path d="M11 6h2l1 9h-4z" fill="#ec8e2a"/><text x="12" y="23" class="edt" text-anchor="middle">EDT</text></svg></button>
    <button aria-label="Chrome"><svg class="i24"><use href="#chrome"/></svg></button>
    <button class="run dot" aria-label="Chrome profile 1"><svg class="i30" viewBox="0 0 30 30"><use href="#chrome" x="1" y="5" width="24" height="24"/><circle cx="21" cy="8" r="8" fill="#8b8288"/><path d="M16 5l4-2 5 3-3 4 3 3-6 1-3-4z" fill="#4a444c"/><circle cx="20" cy="8" r="2.500" fill="#d0b8b8"/></svg></button>
    <button class="run dot" aria-label="Chrome profile 2"><svg class="i30" viewBox="0 0 30 30"><use href="#chrome" x="1" y="5" width="24" height="24"/><circle cx="21" cy="8" r="8" fill="#d07a22"/><path d="M20 1h2l1 8 5 3-4 3h-6l-3-2 4-3z" fill="#2b2114"/></svg></button>
    <button class="run dot" aria-label="App"><svg class="i24" viewBox="0 0 24 24"><defs><linearGradient id="gp" x1="0" y1="1" x2="1" y2="0"><stop offset="0" stop-color="#2e7df0"/><stop offset=".6" stop-color="#5a45e0"/><stop offset="1" stop-color="#f08a4a"/></linearGradient></defs><rect width="24" height="24" rx="5" fill="url(#gp)"/><path d="M7 10l9-3M5 14l14-4M9 17l10-3" stroke="#fff" stroke-width="2.500" fill="none"/></svg></button>
    <button class="run dot" aria-label="Edge"><svg class="i24" viewBox="0 0 24 24"><circle cx="12" cy="12" r="12" fill="#1f72c0"/><path d="M0 11Q2 0 12 0t12 11q-1 6-8 5 3-8-5-9T0 11z" fill="#27a7e0"/><path d="M17 2q7 3 7 9-1 6-8 5 3-5 0-8z" fill="#4cbf72"/><path d="M11 11q-2 7 5 9 4 0 6-2-5 7-12 5-5-6 1-12z" fill="#15458e"/><path d="M11 12q1-3 3-2 2 2 0 5 4 5 9 2-4 5-9 2-4-3-3-7z" fill="#e8f2f8"/></svg></button>
    <button class="run dot" aria-label="Quick search"><svg class="i24" viewBox="0 0 24 24"><rect x="2" y="2" width="20" height="20" rx="4" fill="#2b1a78"/><circle cx="12" cy="11" r="4.500" fill="none" stroke="#fff" stroke-width="2"/><path d="M12 11h3v6h2" fill="none" stroke="#fff" stroke-width="2"/><path d="M6 6l2 1M18 5l-1 2M5 17l2-1" stroke="#bba6ff"/></svg></button>
  </div>
  <div class="tray">
    <button aria-label="Hidden icons"><svg class="i16" viewBox="0 0 16 16"><path d="M3 10.500L8 5.500l5 5" fill="none" stroke="#222" stroke-width="1.500"/></svg></button>
    <button aria-label="OneDrive"><svg class="i18" viewBox="0 0 18 18"><path d="M3 12q-3-2-2-5t5-3q3-3 6-1t4 4l-2 5z" fill="#d9d9d9" stroke="#555"/><circle cx="12.500" cy="12.500" r="5" fill="#0f6cbd"/><path d="M12.500 9v1M12.500 11.500v4" stroke="#fff" stroke-width="1.300"/></svg></button>
    <button aria-label="Microphone"><svg class="i18" viewBox="0 0 18 18"><rect x="6.500" y="1.500" width="5" height="10" rx="2.500" fill="none" stroke="#2757ad" stroke-width="1.300"/><path d="M3.500 8.500q0 5.500 5.500 5.500t5.500-5.500M9 14v3" fill="none" stroke="#2757ad" stroke-width="1.300"/></svg></button>
    <button class="lang">ENG<br>IN</button>
    <button class="net" aria-label="Network and volume"><svg class="i18" viewBox="0 0 18 18"><path d="M1 7q8-7 16 0M3.500 10q5.500-5 11 0M6 13q3-3 6 0" fill="none" stroke="#222" stroke-width="1.300"/><circle cx="9" cy="14.500" r="1.300" fill="#222"/></svg><svg class="i18" viewBox="0 0 18 18"><path d="M1.500 6.500H4L8 3v12l-4-3.500H1.500zM10.500 6.500q2 2.500 0 5M12.500 4.500q4 4.500 0 9" fill="none" stroke="#222" stroke-width="1.200"/><path d="M14.500 3q5 6 0 12" fill="none" stroke="#aaa"/></svg></button>
    <button class="clock">22:49<br>24-05-2026</button>
  </div>
</div>
<script src="strands.js"></script>
</body>
</html>
```
FILE: strands.js
```js
// Strands that touch the bundle edge or sit off the hexagonal packing.
const loose = [
  582,80, 634,74, 686,74, 757,79, 808,89, 859,103, 910,122, 957,145, 1002,171, 1070,222, 1107,258, 1170,334, 1196,379,
  1230,446, 1247,495, 1261,546, 1269,597, 1273,650, 1273,702, 1265,775, 1254,828, 1222,867, 1222,919, 1198,966,
  1152,1038, 1118,1078, 1079,1113, 1041,1148, 997,1181, 952,1206, 884,1237, 834,1253, 783,1246, 738,1272, 686,1275,
  644,1243, 600,1271, 549,1262, 496,1248, 447,1230, 398,1207, 353,1182, 284,1130, 245,1096, 182,1019, 154,975,
  121,911, 103,862, 89,810, 80,760, 74,707, 74,653, 80,584, 90,533, 121,492, 121,439, 159,404, 166,352, 206,297,
  241,258, 278,222, 320,189, 368,157, 414,132, 462,111, 512,95,
  554,124, 623,127, 674,140, 719,114, 768,132, 820,139, 869,153, 916,176, 962,202, 1018,220, 1066,290, 1124,307,
  1124,360, 1132,409, 1181,429, 1190,480, 1207,529, 1221,580, 1224,631, 1225,683, 1234,735, 1203,818, 1194,768,
  1172,903, 1133,936, 1150,986, 1103,1021, 1070,1061, 1025,1088, 993,1126, 946,1155, 903,1189, 855,1172, 814,1205,
  727,1221, 677,1203, 585,1221, 533,1211, 489,1185, 439,1175, 393,1150, 335,1133, 286,1063, 225,1047, 228,996,
  171,927, 162,875, 142,828, 129,776, 122,725, 123,674, 115,621, 146,537, 155,588, 176,453, 210,412, 218,348,
  258,314, 290,272, 337,250, 368,210, 414,185, 462,165, 514,157,
  589,164, 638,178, 687,199, 726,166, 776,184, 827,191, 875,209, 919,235, 968,254, 1017,272, 545,198, 456,216,
  411,242, 505,231, 377,283, 331,308, 297,348, 257,384, 595,215, 644,232, 692,250, 741,268, 735,217, 785,235,
  835,243, 880,271, 1128,595, 1176,612, 1168,562, 1128,647, 1175,664, 221,760, 182,792, 171,744
];
const spots = [];
for (let k = 0; k < loose.length; k += 2) spots.push([loose[k], loose[k + 1]]);
const edge = spots.slice();
for (let j = -14; j <= 14; j++) {
  for (let i = -14; i <= 14; i++) {
    const x = 675 + 48.9 * i + 9.1 * j;
    const y = 675 + 17.6 * i + 51.2 * j;
    if (Math.hypot(x - 675, y - 675) > 562) continue;
    if (edge.every(([u, v]) => Math.hypot(u - x, v - y) > 42)) spots.push([x, y]);
  }
}
const coil = document.getElementById('coil');
for (const [x, y] of spots) {
  const c = document.createElementNS('http://www.w3.org/2000/svg', 'circle');
  c.setAttribute('cx', x);
  c.setAttribute('cy', y);
  c.setAttribute('r', 23);
  c.setAttribute('class', 'strand');
  coil.appendChild(c);
}
```
FILE: styles.css
```css
* { box-sizing: border-box; }
body { margin: 0; min-height: 100vh; display: flex; flex-direction: column; background: #efefef; color: #101014; font: 11px/15px "Open Sans", "Noto Sans", sans-serif; }
h1, h2, h3, h4, p, ul { margin: 0; padding: 0; font-weight: 400; list-style: none; }
button { font: inherit; color: inherit; background: none; border: 0; padding: 0; display: flex; align-items: center; justify-content: center; }
a { color: inherit; text-decoration: none; }
svg { flex: none; display: block; }
.sprite { display: none; }
.i10 { width: 10px; height: 10px; }
.i14 { width: 14px; height: 14px; }
.i16 { width: 16px; height: 16px; }
.i18 { width: 18px; height: 18px; }
.i24 { width: 24px; height: 24px; }
.i30 { width: 30px; height: 30px; }
.i32 { width: 32px; height: 32px; }
.caret { width: 8px; height: 8px; color: #000; }
.blue { color: #2f86cb; }
.grey { color: #888; }

.titlebar { display: flex; align-items: center; height: 34px; }
.applogo { width: 35px; padding-left: 8px; }
.quick { display: flex; align-items: center; }
.quick button { width: 30px; height: 30px; }
.quick .slim { width: 24px; }
.quick .drop { width: 16px; color: #777; }
.quick .drop + .slim { margin-left: 1px; }
.titlebar h1 { font-size: 12px; margin-left: 9px; color: #444; flex: 1; }
.winbtns { display: flex; }
.winbtns button { width: 44px; height: 30px; color: #3d3f48; }

.menu { display: flex; height: 30px; padding: 0 4px 0 34px; gap: 20px; font-size: 12px; line-height: 31px; }
.menu .file { margin-right: 8px; }
.menu .on { color: #2f86cb; border-bottom: 2px solid #2f86cb; }
.help { margin: 7px 0 0 auto; width: 16px; height: 16px; background: #2f86cb; color: #fff; font-size: 13px; line-height: 16px; }

.ribbon { margin: 0 4px; height: 104px; background: #fafbff; border-radius: 3px; box-shadow: 0 1px 1px #d0d1d4; display: flex; padding: 5px 0; }
.group { display: flex; flex-direction: column; border-right: 1px solid #d4d5d9; flex: none; }
.g1 { width: 97px; } .g2 { width: 189px; } .g3 { width: 205px; } .g4 { width: 159px; } .g5 { width: 76px; }
.g6 { width: 227px; } .g7 { width: 119px; } .g8 { width: 189px; } .g9 { width: 224px; } .g10 { width: 153px; }
.btns { flex: 1; display: flex; justify-content: center; align-items: flex-start; }
.btns > button { flex-direction: column; padding: 2px 9px 0; text-align: center; }
.btns > button > span:last-child { margin-top: 3px; white-space: nowrap; }
.btns button:disabled { color: #8f9299; }
.group p { text-align: center; line-height: 9px; }
.chev { display: inline-block; width: 8px; height: 8px; }
.big { height: 32px; font-size: 25px; line-height: 32px; color: #2f86cb; }
.pi { font-size: 20px; }
.big sub { font-size: 18px; vertical-align: -4px; line-height: 10px; }
.green { color: #2fa58e; font-size: 28px; }
.pale { color: #c4c4c4; }
.stack { display: flex; flex-direction: column; gap: 8px; margin: 1px 4px 0; }
.g4 .stack { margin: 1px 8px 0 0; }
.stack button { height: 20px; justify-content: flex-start; white-space: nowrap; gap: 4px; }
.lead { width: 18px; font-style: normal; font-size: 14px; color: #2f86cb; text-align: center; margin-right: 1px; }
.fx { font-size: 10px; }
.fx sub { font-size: 9px; }
.stack :disabled .lead { color: #b9bcc2; }

.work { flex: 1; display: grid; grid-template-columns: minmax(0, 416fr) minmax(0, 612fr) minmax(0, 868fr); gap: 7px; padding: 7px 5px 0; min-height: 700px; }
.pane { background: #fafbff; border-radius: 3px 3px 0 0; display: flex; flex-direction: column; min-width: 0; }
.panehead { display: flex; justify-content: space-between; height: 34px; padding: 7px 3px 0 7px; }
.panehead h2 { font-size: 20px; line-height: 28px; color: #2659a4; }
.panehead .lit { color: #2f86cb; }
.panemenu { width: 40px; height: 12px; margin-top: 6px; }

.treebar { display: flex; align-items: center; height: 20px; padding-left: 7px; gap: 7px; }
.treebar button { height: 16px; }
.treebar .pair { gap: 7px; margin-right: 2px; }
.filter { display: flex; align-items: center; height: 18px; margin: 6px 9px 6px 5px; gap: 10px; }
input[type=text] { font: inherit; color: #101014; height: 18px; border: 1px solid #cdcfd3; background: #fff; padding: 0 2px; min-width: 0; }
.filter input { flex: 1; }
.filter input::placeholder { color: #8d9097; opacity: 1; }
.treebox { flex: 1; margin: 0 5px 8px; border: 1px solid #cdcfd3; background: #fff; display: flex; }
.tree { flex: 1; }
.tree li { height: 18px; display: flex; align-items: center; padding-bottom: 2px; }
.tree li svg { width: 16px; height: 16px; margin-right: 6px; }
.tree li::before { content: ""; width: 6px; height: 6px; margin-right: 9px; margin-left: 5px; }
.l0 { padding-left: 20px; } .l1 { padding-left: 40px; } .l2 { padding-left: 60px; } .l3 { padding-left: 80px; }
.tree .shut::before { border: solid #555; border-width: 1px 1px 0 0; transform: rotate(45deg); margin-left: 3px; margin-right: 11px; }
.tree .openn::before { border: solid #222; border-width: 0 1px 1px 0; transform: rotate(45deg); }
.picked { background: #d9d9db; }
.hover { background: #e0f0fd; }

.bar { width: 17px; flex: none; display: flex; flex-direction: column; background: #fdfdff; }
.bar .up, .bar .down { height: 17px; flex: none; display: flex; align-items: center; justify-content: center; background: #f4f4f6; }
.bar .up::before, .bar .down::before { content: ""; width: 6px; height: 6px; border: solid #c4c6ca; border-width: 1px 0 0 1px; transform: rotate(45deg); }
.bar .down::before { transform: rotate(225deg); }
.bar .thumb { background: #e3e4e7; }
.bar .room { flex: 1; }
.treescroll .thumb { height: 53px; }
.listscroll .thumb { height: 8px; }
.formscroll .thumb { flex: 16; }
.logscroll .thumb { height: 41px; }

.kind { color: #2659a4; font-size: 12px; line-height: 20px; padding-left: 6px; height: 23px; }
.scroller { flex: 1; display: flex; min-height: 0; }
.form { flex: 1; min-width: 0; display: flex; flex-direction: column; }
.names { display: grid; grid-template-columns: 46px 1fr 28px; row-gap: 6px; align-items: center; padding: 8px 5px 8px 4px; border-bottom: 1px solid #cdcfd3; }
.names label, .geo label { white-space: nowrap; padding-left: 1px; }
.goto { width: 20px; height: 22px; justify-self: end; background: #ededef; border: 1px solid #cdcfd3; border-radius: 2px; }
.sec { color: #2659a4; font-size: 13px; line-height: 18px; }
.first { padding: 7px 6px 12px; }
.geo { display: grid; grid-template-columns: 129px 1fr; row-gap: 6px; padding: 0 5px 0 4px; align-items: center; }
.pick { display: flex; align-items: center; height: 21px; border: 1px solid #cdcfd3; border-radius: 2px; background: linear-gradient(#eeeef0, #e6e6e9); padding: 0 6px 0 12px; }
.pick select { appearance: none; border: 0; background: none; font: inherit; color: inherit; flex: 1; padding: 0; outline: 0; }
.lefticon { margin: 0 4px 0 1px; }
.entities { display: flex; align-items: flex-start; padding: 6px 5px 9px 4px; border-bottom: 1px solid #cdcfd3; }
.toggle { width: 39px; height: 39px; background: #cbe6fb; border: 1px solid #8fcdf5; border-radius: 2px; }
.toggle svg { width: 32px; height: 16px; }
.list { flex: 1; margin-left: 8px; border: 1px solid #cdcfd3; border-bottom-width: 3px; display: flex; padding: 1px 1px 0 0; }
.list ul { flex: 1; padding: 0 6px; }
.list li { line-height: 19px; }
.tools { display: grid; grid-template-columns: 16px 16px; column-gap: 16px; row-gap: 4px; margin: 1px 3px 0 15px; }
.fold { display: flex; align-items: center; gap: 10px; height: 29px; padding: 0 5px; border-bottom: 1px solid #cdcfd3; }
.fold svg { width: 10px; height: 10px; }
.fold .side { transform: rotate(-90deg); color: #111; }
.unfolded { border: 0; }
.tablebox { margin: 7px 5px 0; border: 1px solid #cdcfd3; background: #fcfdff; }
.contents { border-bottom-width: 3px; height: 250px; }
table { width: 100%; table-layout: fixed; border-collapse: collapse; }
.c31 { width: 31px; } .c203 { width: 203px; } .c58 { width: 58px; } .c70 { width: 70px; }
.c80 { width: 80px; } .c114 { width: 114px; } .c46 { width: 46px; } .c171 { width: 171px; }
th { height: 26px; text-align: left; font-weight: 400; background: #efeff0; border-right: 1px solid #a9abaf; padding: 6px 0 0 5px; line-height: 15px; }
td { height: 21px; background: #f4f4f6; border-right: 1px solid #a9abaf; border-bottom: 1px solid #a9abaf; padding: 0 0 0 3px; white-space: nowrap; }
.w { background: #fff; }
.ffc { vertical-align: top; padding: 3px 0 0 4px; }
th svg { width: 10px; height: 8px; }
.ffn { padding-left: 4px; }
.ffn svg { float: left; margin: -4px 4px 0 0; }
td input { appearance: none; display: block; width: 13px; height: 13px; margin: 0 0 0 5px; border: 1px solid #2f86cb; background: #fff; }
td input::after { content: ""; display: block; width: 4px; height: 8px; margin: 0 0 0 4px; border: solid #2f86cb; border-width: 0 1px 1px 0; transform: rotate(40deg); }
.minibar { display: flex; align-items: center; gap: 7px; padding: 0 8px; height: 30px; }
.minibar .caret { margin-left: 4px; }
.rule { display: flex; align-items: center; gap: 3px; height: 12px; margin: 0 5px; }
.rule::before, .rule::after { content: ""; height: 1px; background: #cdcfd3; width: 9px; }
.rule::after { flex: 1; }
.local { flex: 1; margin-top: 7px; border-bottom: 0; }

.right { display: grid; grid-template-rows: 1fr 195px; gap: 7px; min-width: 0; }
.gbar { display: flex; align-items: center; height: 23px; padding: 0 0 2px 4px; }
.gbar button { height: 21px; }
.gbar button svg:first-child { width: 16px; height: 16px; margin: 0 4px 0 3px; }
.gbar .caret { margin: 0 2px; }
.gbar .apart { margin-left: 6px; }
.gbar hr { width: 1px; height: 18px; border: 0; margin: 0 5px 0 8px; background: #cdcfd3; }
.gbar .near { margin-left: 3px; }
.gbar .lit { background: #cbe6fb; outline: 1px solid #9dd2f5; outline-offset: -1px; padding-right: 3px; margin-right: 2px; }
.plot { flex: 1; background: #c8c8c8; display: flex; align-items: center; justify-content: center; padding: 0 12px 20px 0; }
.plot svg { width: 450px; height: 450px; }
.hull { fill: #c8c8c8; stroke: #111; stroke-width: 3px; }
.strand { fill: #b3b3f2; stroke: #0000f4; stroke-width: 5px; }

.tabs { display: flex; height: 32px; border-bottom: 1px solid #cdcfd3; padding: 0 3px 0 8px; font-size: 13px; line-height: 30px; color: #44474f; gap: 19px; }
.tabs a { display: flex; align-items: center; padding: 0 4px; height: 31px; }
.tabs .on { color: #2659a4; border-bottom: 2px solid #2f86cb; }
.x { width: 14px; height: 14px; margin-left: 5px; color: #c5c9d3; }
.tabs .panemenu { margin: 8px 0 0 auto; }
.logbar { height: 24px; padding-bottom: 3px; }
.output { flex: 1; border: 1px solid #cdcfd3; margin: 0 4px 5px; display: flex; justify-content: flex-end; }

.status { height: 32px; padding-left: 64%; display: flex; align-items: center; justify-content: flex-start; }
.status span { padding-left: 12px; }
.taskbar { height: 48px; padding-bottom: 1px; border-top: 1px solid #b4bac6; display: grid; grid-template-columns: 1fr auto 1fr; align-items: center; background: linear-gradient(90deg, #e4eff7 0, #e2edf8 20%, #d6e3fa 27%, #d8dcee 38%, #d7dbed 60%, #d6e2f8 68%, #d8dced 76%, #e1ebf6 82%, #e0ebf6 100%); }
.weather { justify-self: start; margin-left: 18px; gap: 2px; font-size: 11px; line-height: 16px; text-align: left; }
.weather svg { width: 30px; height: 32px; }
.weather text { fill: #fff; font-size: 10px; }
.weather small { font-size: 11px; color: #666; }
.apps { display: flex; align-items: center; }
.apps button { width: 44px; height: 40px; position: relative; }
.apps .tile { background: linear-gradient(#f2f5fb, #f2f5fb) center / 38px 40px no-repeat; }
.run::after { content: ""; position: absolute; bottom: 0; width: 16px; height: 3px; border-radius: 2px; background: #0f6cbd; }
.dot::after { width: 6px; background: #858a93; }
.search { width: 218px; height: 32px; margin: 0 3px 0 4px; padding: 0 2px 0 10px; border-radius: 16px; background: #f2f6fc; border: 1px solid #ccd2df; display: flex; align-items: center; gap: 9px; }
.search input { flex: 1; min-width: 0; border: 0; background: none; font: 13px/18px "Open Sans", sans-serif; padding: 0; }
.search input::placeholder { color: #555; opacity: 1; }
.ball { width: 48px; height: 26px; }
.m365 { fill: #fff; font: bold 7px "Liberation Sans", sans-serif; }
.edt { fill: #fff; font: bold 10px "Liberation Sans", sans-serif; }
.tray { justify-self: end; display: flex; align-items: center; padding-right: 18px; font-size: 12px; line-height: 16px; }
.tray button { min-width: 32px; height: 40px; }
.tray .lang { width: 44px; display: block; text-align: center; }
.net { gap: 5px; width: 52px; }
.tray .clock { display: block; text-align: right; padding-left: 14px; }
```
